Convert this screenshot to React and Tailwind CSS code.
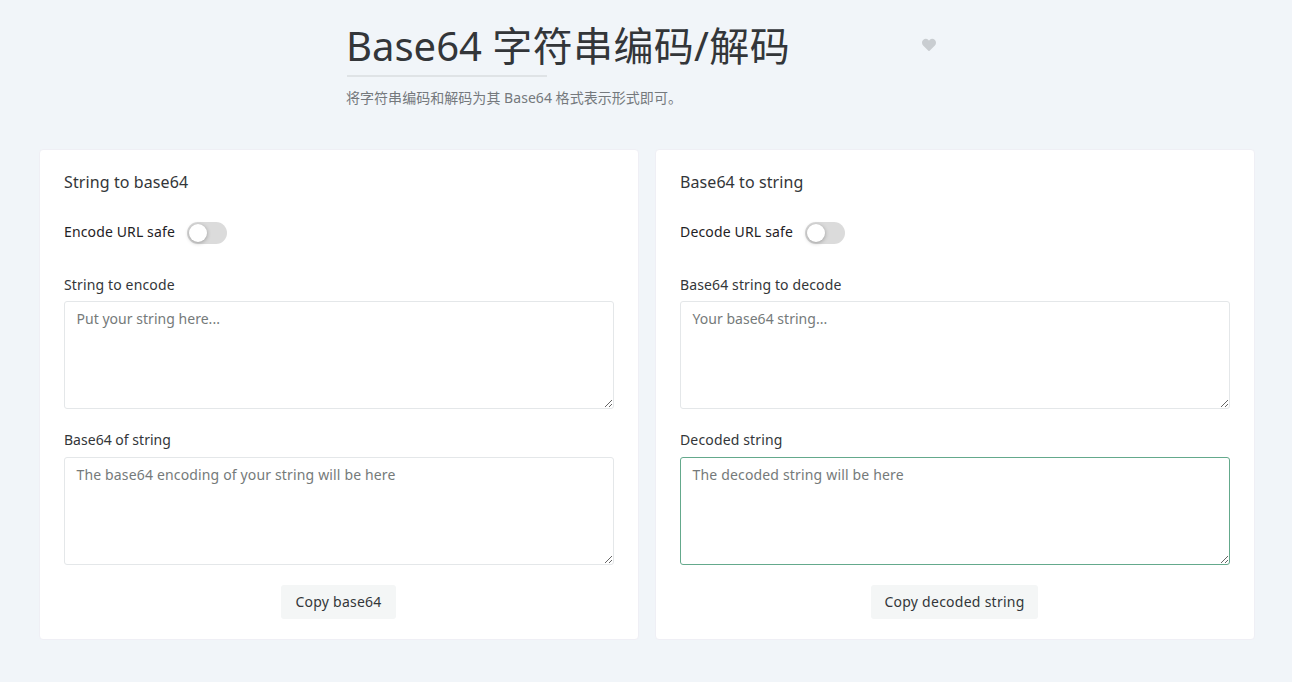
import { useState } from "react";

function Switch({ label, trackingClass }) {
  const [on, setOn] = useState(false);
  return (
    <div className="mt-[23px] flex h-[28px] items-center">
      <span className={`whitespace-nowrap text-sm leading-[28px] text-[#1f2225] ${trackingClass}`}>{label}</span>
      <button
        type="button"
        role="switch"
        aria-checked={on}
        aria-label={label}
        onClick={() => setOn(!on)}
        className={`mt-[2px] ml-3 flex h-[22px] w-10 items-center rounded-full px-[2px] ${on ? "justify-end bg-[#5fa88c]" : "justify-start bg-[#dbdbdb]"}`}
      >
        <span className="size-[18px] rounded-full bg-white shadow-[0_1px_4px_rgba(0,0,0,0.3)]" />
      </button>
    </div>
  );
}

function Field({ label, placeholder, labelClass, areaClass, spacing }) {
  return (
    <label className={`block ${spacing}`}>
      <span className={`block h-[26px] text-sm leading-[26px] text-[#333639] ${labelClass}`}>{label}</span>
      <textarea
        placeholder={placeholder}
        className={`block h-[108px] w-full resize-y rounded-[3px] border bg-white px-[11.5px] py-[6px] text-sm leading-[22px] text-[#333639] outline-none placeholder:text-[#757a7a] ${areaClass}`}
      />
    </label>
  );
}

function Card({ title, titleClass, children, action, actionClass }) {
  return (
    <section className="flex h-[491px] w-[600px] flex-col rounded-[4px] border border-[#efeff5] bg-white px-6 pt-[19px]">
      <h2 className={`h-[26px] shrink-0 text-base leading-[26px] text-[#333639] ${titleClass}`}>{title}</h2>
      {children}
      <button type="button" className={`mt-5 mr-px h-[34px] shrink-0 self-center whitespace-nowrap rounded-[3px] bg-[#f4f6f6] text-sm text-[#333639] ${actionClass}`}>
        {action}
      </button>
    </section>
  );
}

export default function App() {
  return (
    <div className="h-[682px] overflow-hidden bg-[#f1f5f9] font-['Noto_Sans','Noto_Sans_CJK_SC',sans-serif]">
      <header className="ml-[346px] h-[149px] w-[601px] pt-[15px]">
        <div className="flex h-[60px] items-center justify-between pr-[11px]">
          <h1 className="whitespace-nowrap pt-[2px] text-[40px] leading-[60px] text-[#333639]">
            Base64 <span className="tracking-[0.35px]">字符串编码/解码</span>
          </h1>
          <button type="button" aria-label="Favorite" className="-mt-px text-[#c9cdd1]">
            <svg width="14" height="14" viewBox="0 0 512 512" fill="currentColor">
              <path d="M462.3 62.6C407.5 15.9 326 24.3 275.7 76.2L256 96.5l-19.7-20.3C186.1 24.3 104.5 15.9 49.7 62.6c-62.8 53.6-66.1 149.8-9.9 207.9l193.5 199.8c12.5 12.9 32.8 12.9 45.3 0l193.5-199.8c56.3-58.1 53-154.3-9.8-207.9z" />
            </svg>
          </button>
        </div>
        <div className="ml-px h-[2px] w-[200px] bg-[#dfe3e6]" />
        <p className="mt-[10px] text-sm leading-[22px] tracking-[0.04px] text-[#75797d]">将字符串编码和解码为其 Base64 格式表示形式即可。</p>
      </header>
      <main className="flex gap-4 pl-[39px]">
        <Card title="String to base64" titleClass="tracking-[0.1px]" action="Copy base64" actionClass="w-[115px] tracking-[0.22px]">
          <Switch label="Encode URL safe" trackingClass="tracking-[0.13px]" />
          <Field label="String to encode" placeholder="Put your string here..." spacing="mt-[26px]" labelClass="mb-[3px] tracking-[0.14px]" areaClass="border-[#e4e7e9] tracking-[0.03px]" />
          <Field label="Base64 of string" placeholder="The base64 encoding of your string will be here" spacing="mt-[18px]" labelClass="mb-1 tracking-[0.02px]" areaClass="border-[#e4e7e9] tracking-[0.155px]" />
        </Card>
        <Card title="Base64 to string" titleClass="tracking-[0.08px]" action="Copy decoded string" actionClass="w-[167px] tracking-[0.26px]">
          <Switch label="Decode URL safe" trackingClass="tracking-[0.16px]" />
          <Field label="Base64 string to decode" placeholder="Your base64 string..." spacing="mt-[26px]" labelClass="mb-[3px] tracking-[0.12px]" areaClass="border-[#e4e7e9] tracking-[0.03px]" />
          <Field label="Decoded string" placeholder="The decoded string will be here" spacing="mt-[18px]" labelClass="mb-1 tracking-[0.15px]" areaClass="border-[#64a98c] tracking-[0.17px]" />
        </Card>
      </main>
    </div>
  );
}
